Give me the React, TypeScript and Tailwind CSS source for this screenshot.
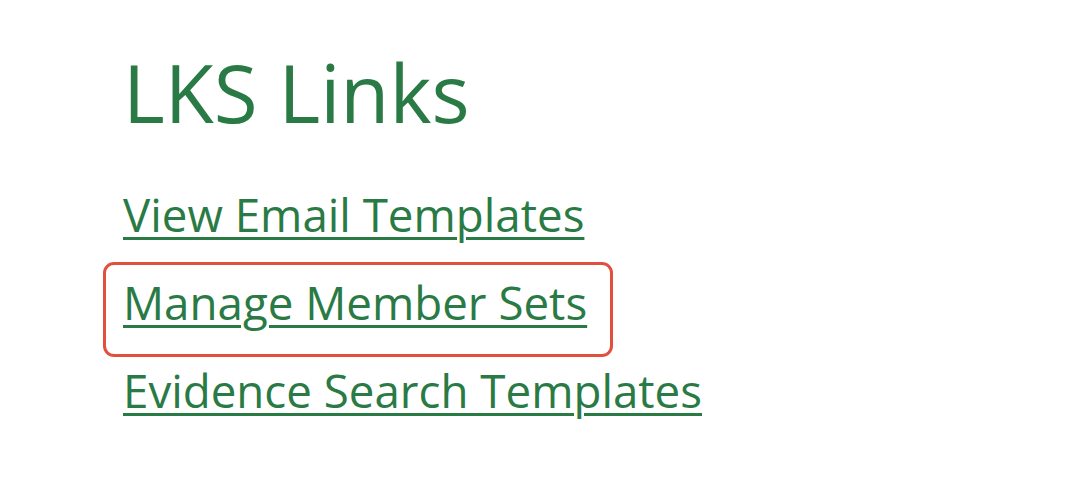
const links = [
  { label: "View Email Templates", highlight: false },
  { label: "Manage Member Sets", highlight: true },
  { label: "Evidence Search Templates", highlight: false },
];

export default function App() {
  return (
    <div className="min-h-screen bg-white pl-[123px] pt-[42px] text-[#2a7a45]" style={{ fontFamily: '"Open Sans", sans-serif' }}>
      <h1 className="text-[80px] leading-[100px] font-normal">LKS Links</h1>
      {/* link list, one row per template page */}
      <ul className="mt-[32px] flex flex-col">
        {links.map((l) => (
          <li key={l.label} className="h-[88px] -ml-[20px] flex items-start">
            <a
              href="#"
              className={
                "block text-[45.7px] leading-[62px] underline decoration-[3px] underline-offset-[5px] pl-[17px] pr-[23px] pt-[6px] pb-[21px] rounded-[11px] border-[3px] " +
                (l.highlight ? "border-[#e24f3c]" : "border-transparent")
              }
            >
              {l.label}
            </a>
          </li>
        ))}
      </ul>
    </div>
  );
}
